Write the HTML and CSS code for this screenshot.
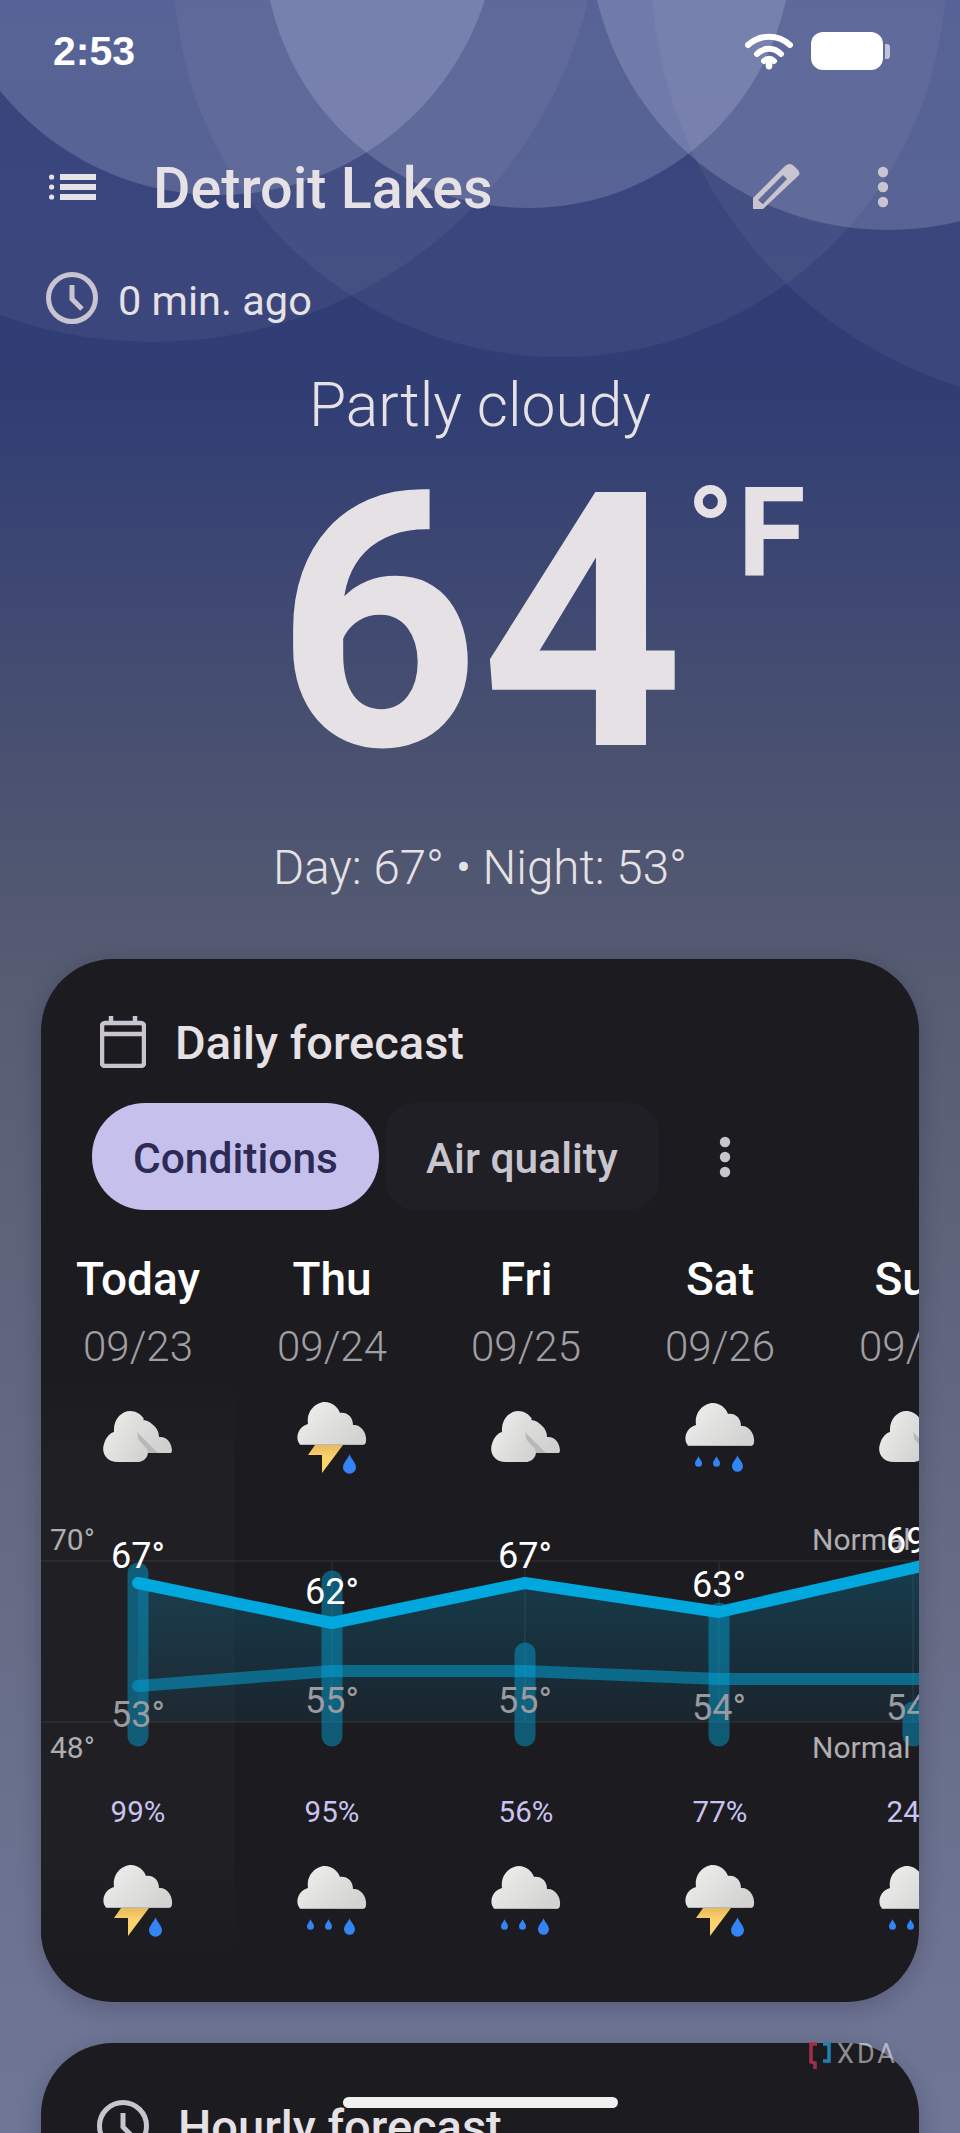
FILE: index.html
```html
<!doctype html>
<html>
<head>
<meta charset="utf-8" />
<meta name="viewport" content="width=device-width" />

<title>Detroit Lakes</title>

<link rel="stylesheet" href="styles.css">

</head>
<body>

<svg class="sky" viewBox="0 0 960 500" aria-hidden="true">
  <circle class="sky-faint" cx="153" cy="-106" r="448" />
  <circle class="sky-faint" cx="560" cy="-29" r="386" />
  <circle class="sky-faint" cx="1092" cy="-34" r="441" />
  <circle class="sky-light" cx="218" cy="-85" r="280" />
  <circle class="sky-light" cx="528" cy="-56" r="264" />
  <circle class="sky-light" cx="888" cy="-69" r="299" />
</svg>

<svg class="defs" aria-hidden="true">
  <defs>
    <linearGradient id="cloud-front" x1="0" y1="0" x2="1" y2="0.6">
      <stop offset="0" stop-color="#f1f1f0" />
      <stop offset="1" stop-color="#d3d3d1" />
    </linearGradient>
    <linearGradient id="cloud-back" x1="0" y1="0" x2="1" y2="0.6">
      <stop offset="0" stop-color="#e0e0de" />
      <stop offset="1" stop-color="#cfcfcd" />
    </linearGradient>
    <linearGradient id="bolt" x1="0" y1="0" x2="0" y2="1">
      <stop offset="0" stop-color="#e6b95f" />
      <stop offset="0.45" stop-color="#fdd36c" />
    </linearGradient>
    <linearGradient id="chart-area" x1="0" y1="0" x2="0" y2="1">
      <stop offset="0" stop-color="#00a8de" stop-opacity="0.24" />
      <stop offset="1" stop-color="#00a8de" stop-opacity="0.07" />
    </linearGradient>
    <symbol id="cloud" viewBox="0 0 70 70">
      <path fill="url(#cloud-front)" d="M4 43 C-2 40 -1 25 11 22 C9 8 20 0 28 0 C35 0 41 5 43 11 C50 10 56 15 56 23 C64 22 70 31 69 39 C69 42 67 43 65 43 Z" />
      <path fill="#b9b9b7" d="M4 43 H65 L67 42 H2 Z" />
    </symbol>
    <symbol id="drop" viewBox="0 0 12 18">
      <path fill="#3384f5" d="M6 0 C8 5 12 8 12 12 A6 6 0 0 1 0 12 C0 8 4 5 6 0 Z" />
    </symbol>
    <symbol id="partly" viewBox="0 0 70 70">
      <path fill="url(#cloud-back)" d="M30 42 V12 C36 8 44 8 49 13 C54 17 56 21 56 26 C63 25 69 31 69 40 L68 42 Z" />
      <path fill="#b8b8b6" d="M34 21 L35 28 L45 42 H55 Z" />
      <path fill="url(#cloud-front)" d="M15 51 C3 51 -2 41 1 33 C3 26 7 22 11 21 C10 8 19 0 27 0 C33 0 38 3 41 8 C37 11 35 16 34 21 L35 28 L44 38 C47 44 42 51 34 51 Z" />
    </symbol>
    <symbol id="storm" viewBox="0 0 70 72">
      <use href="#cloud" width="70" height="70" />
      <path fill="url(#bolt)" d="M18 43 H46 L25 71 V53 H11 Z" />
      <use href="#drop" x="46" y="52" width="13" height="20" />
    </symbol>
    <symbol id="rain" viewBox="0 0 70 72">
      <use href="#cloud" width="70" height="70" />
      <use href="#drop" x="10" y="53" width="7" height="11" />
      <use href="#drop" x="28" y="53" width="7" height="11" />
      <use href="#drop" x="47" y="52" width="11" height="17" />
    </symbol>
  </defs>
</svg>

<div class="status">
  <span class="status-time">2:53</span>
  <div class="status-icons">
    <svg class="status-wifi" viewBox="0 0 48 38">
      <path d="M3 13 C15 2 33 2 45 13" />
      <path d="M12 22 C19 15 29 15 36 22" />
      <path d="M19 29 C22 26 26 26 29 29" />
      <ellipse cx="24" cy="33" rx="3.4" ry="4.6" />
    </svg>
    <div class="status-battery"></div>
  </div>
</div>

<header class="app-header">
  <svg class="icon-menu" viewBox="0 0 47 26">
    <circle cx="2.6" cy="3" r="2.6" />
    <circle cx="2.6" cy="13" r="2.6" />
    <circle cx="2.6" cy="23" r="2.6" />
    <rect x="11" y="0" width="36" height="6" />
    <rect x="11" y="10" width="36" height="6" />
    <rect x="11" y="20" width="36" height="6" />
  </svg>
  <h1 class="app-title">Detroit Lakes</h1>
  <svg class="icon-edit" viewBox="0 0 48 48">
    <path fill-rule="evenodd" d="M1 35 L33 3 Q38 -1 42 3 L46 7 Q49 11 46 13 L11 46 H1 Z M6 37 L31 12 L35 16 L11 41 Z" />
  </svg>
  <svg class="icon-dots" viewBox="0 0 12 42">
    <circle cx="6" cy="6" r="5.2" />
    <circle cx="6" cy="21" r="5.2" />
    <circle cx="6" cy="36" r="5.2" />
  </svg>
</header>

<div class="updated">
  <svg class="icon-clock" viewBox="0 0 52 52">
    <circle cx="26" cy="26" r="23.5" />
    <path d="M26 13 V27 L36 37" />
  </svg>
  <span class="updated-text">0 min. ago</span>
</div>

<div class="condition">Partly cloudy</div>

<div class="now">
  <span class="now-temp">64</span>
  <span class="now-unit">°F</span>
</div>

<div class="day-night">Day: 67° • Night: 53°</div>

<section class="card">
  <div class="card-title">
    <svg class="icon-calendar" viewBox="0 0 46 52">
      <rect x="2" y="7" width="42" height="43" rx="3" />
      <path d="M2 18 H44 M11 0 V7 M35 0 V7" />
    </svg>
    <h2>Daily forecast</h2>
  </div>

  <div class="chips">
    <div class="chip chip--on"><span class="chip-text">Conditions</span></div>
    <div class="chip"><span class="chip-text">Air quality</span></div>
    <svg class="icon-dots icon-dots--chip" viewBox="0 0 12 42">
      <circle cx="6" cy="6" r="5.2" />
      <circle cx="6" cy="21" r="5.2" />
      <circle cx="6" cy="36" r="5.2" />
    </svg>
  </div>

  <div class="forecast">
    <div class="today-shade"></div>

    <div class="row">
      <div class="day">Today</div>
      <div class="day">Thu</div>
      <div class="day">Fri</div>
      <div class="day">Sat</div>
      <div class="day">Sun</div>
    </div>

    <div class="row row--dates">
      <div class="date">09/23</div>
      <div class="date">09/24</div>
      <div class="date">09/25</div>
      <div class="date">09/26</div>
      <div class="date">09/27</div>
    </div>

    <div class="row row--icons">
      <div class="cell"><svg class="wx wx--partly"><use href="#partly" /></svg></div>
      <div class="cell"><svg class="wx"><use href="#storm" /></svg></div>
      <div class="cell"><svg class="wx wx--partly"><use href="#partly" /></svg></div>
      <div class="cell"><svg class="wx wx--rain"><use href="#rain" /></svg></div>
      <div class="cell"><svg class="wx wx--partly"><use href="#partly" /></svg></div>
    </div>

    <!-- viewBox is in page coordinates -->
    <svg class="chart" viewBox="41 1500 878 290">
      <path class="chart-grid" d="M41 1561 H919 M41 1722 H919 M332 1561 V1722 M525 1561 V1722 M719 1561 V1722 M913 1561 V1722" />
      <path fill="url(#chart-area)" d="M138 1583 L332 1623 L525 1583 L719 1612 L913 1568 L919 1567 V1722 H138 Z" />

      <path class="chart-bar" d="M138 1573 V1736" />
      <path class="chart-bar" d="M332 1581 V1736" />
      <path class="chart-bar" d="M525 1653 V1736" />
      <path class="chart-bar" d="M719 1613 V1736" />
      <path class="chart-bar" d="M913 1712 V1736" />

      <path class="chart-low" d="M138 1686 L332 1671 L525 1671 L719 1679 L925 1679" />
      <path class="chart-high" d="M138 1583 L332 1623 L525 1583 L719 1612 L913 1568 L930 1564" />

      <text class="chart-axis" x="50" y="1550">70°</text>
      <text class="chart-axis" x="50" y="1758">48°</text>
      <text class="chart-axis" x="812" y="1550">Normal</text>
      <text class="chart-axis" x="812" y="1758">Normal</text>

      <text class="chart-hi" x="138" y="1568">67°</text>
      <text class="chart-hi" x="332" y="1604">62°</text>
      <text class="chart-hi" x="525" y="1568">67°</text>
      <text class="chart-hi" x="719" y="1597">63°</text>
      <text class="chart-hi" x="913" y="1553">69°</text>

      <text class="chart-lo" x="138" y="1727">53°</text>
      <text class="chart-lo" x="332" y="1713">55°</text>
      <text class="chart-lo" x="525" y="1713">55°</text>
      <text class="chart-lo" x="719" y="1720">54°</text>
      <text class="chart-lo" x="913" y="1720">54°</text>
    </svg>

    <div class="row row--pops">
      <div class="pop">99%</div>
      <div class="pop">95%</div>
      <div class="pop">56%</div>
      <div class="pop">77%</div>
      <div class="pop">24%</div>
    </div>

    <div class="row row--night">
      <div class="cell"><svg class="wx"><use href="#storm" /></svg></div>
      <div class="cell"><svg class="wx wx--rain"><use href="#rain" /></svg></div>
      <div class="cell"><svg class="wx wx--rain"><use href="#rain" /></svg></div>
      <div class="cell"><svg class="wx"><use href="#storm" /></svg></div>
      <div class="cell"><svg class="wx wx--rain"><use href="#rain" /></svg></div>
    </div>
  </div>
</section>

<section class="card card--next">
  <div class="card-title">
    <svg class="icon-clock icon-clock--card" viewBox="0 0 52 52">
      <circle cx="26" cy="26" r="23.5" />
      <path d="M26 13 V27 L36 37" />
    </svg>
    <h2>Hourly forecast</h2>
  </div>
</section>

<div class="watermark">
  <svg class="watermark-mark" viewBox="0 0 22 28">
    <path class="watermark-red" d="M8 2 H2 V20 L6 21 V27" />
    <path class="watermark-blue" d="M14 2 H20 V19 H14" />
  </svg>
  <span>XDA</span>
</div>

<div class="home-bar"></div>

</body>
</html>
```

FILE: styles.css
```css
* { box-sizing: border-box; }

html, body {
  margin: 0;
  height: 2133px;
}

body {
  position: relative;
  overflow: hidden;
  font-family: Roboto, sans-serif;
  color: #e6e1e5;
  background: linear-gradient(#2e3c78 0, #313e74 400px, #4b5270 780px, #575d72 1000px, #646a82 1500px, #6e7594 2000px, #6f7696 2133px);
}

h1, h2 {
  margin: 0;
  font-weight: 500;
}

/* background circles */
.sky {
  position: absolute;
  left: 0;
  top: 0;
  width: 960px;
  height: 500px;
}

.sky-light { fill: #dfe6ff; fill-opacity: 0.19; }
.sky-faint { fill: #fff; fill-opacity: 0.05; }

.defs {
  position: absolute;
  width: 0;
  height: 0;
}

/* -----  status bar ----- */

.status {
  position: relative;
  height: 102px;
  padding: 0 77px 0 53px;
  display: flex;
  align-items: center;
  justify-content: space-between;
  color: #fff;
}

.status-time {
  font-family: "Liberation Sans", sans-serif;
  font-size: 41px;
  font-weight: 700;
}

.status-icons {
  display: flex;
  align-items: center;
  gap: 18px;
}

.status-wifi {
  width: 48px;
  height: 38px;
  fill: #fff;
}

.status-wifi path {
  fill: none;
  stroke: #fff;
  stroke-width: 6;
  stroke-linecap: round;
}

.status-battery {
  position: relative;
  width: 72px;
  height: 38px;
  border-radius: 12px;
  background: #fff;
}

.status-battery:after {
  content: '';
  position: absolute;
  left: 74px;
  top: 12px;
  width: 5px;
  height: 15px;
  border-radius: 0 3px 3px 0;
  background: rgba(255, 255, 255, 0.6);
}

/* -----  header ----- */

.app-header {
  position: relative;
  height: 64px;
  margin-top: 53px;
  padding: 0 71px 0 49px;
  display: flex;
  align-items: center;
}

.icon-menu {
  width: 47px;
  height: 26px;
  fill: #e6e1e5;
}

.app-title {
  flex: 1;
  margin-left: 57px;
  padding-top: 3px;
  font-size: 57.5px;
  line-height: 64px;
}

.icon-edit {
  width: 48px;
  height: 48px;
  margin-right: 77px;
  fill: #cac4d0;
}

.icon-dots {
  width: 12px;
  height: 42px;
  fill: #cac4d0;
}

.updated {
  position: relative;
  height: 52px;
  margin-top: 53px;
  padding-left: 46px;
  display: flex;
  align-items: center;
  gap: 20px;
  font-size: 41.5px;
}

.updated-text {
  padding-top: 5px;
}

.icon-clock {
  width: 52px;
  height: 52px;
  fill: none;
  stroke: #cac4d0;
  stroke-width: 5;
}

.condition {
  position: relative;
  margin-top: 48px;
  text-align: center;
  font-size: 60.5px;
  font-weight: 300;
  line-height: 68px;
}

.now {
  position: relative;
  height: 300px;
  margin-top: 34px;
  display: grid;
  grid-template-columns: 1fr auto 1fr;
  font-weight: 700;
}

.now-temp {
  grid-column: 2;
  font-size: 356px;
  line-height: 300px;
}

.now-unit {
  margin-left: 2px;
  font-size: 124px;
  line-height: 118px;
  letter-spacing: 3px;
}

.day-night {
  margin-top: 66px;
  text-align: center;
  font-size: 47.5px;
  font-weight: 300;
  line-height: 56px;
}

/* -----  cards ----- */

.card {
  position: relative;
  height: 1043px;
  margin: 63px 41px 0;
  padding-top: 57px;
  overflow: hidden;
  border-radius: 72px;
  background: #1c1b20;
  box-shadow: 0 6px 22px rgba(20, 20, 40, 0.25);
}

.card--next {
  margin-top: 41px;
}

.card-title {
  height: 52px;
  padding-left: 59px;
  display: flex;
  align-items: center;
  gap: 29px;
}

.card-title h2 {
  padding-top: 2px;
  font-size: 47px;
  line-height: 52px;
}

.icon-calendar {
  width: 46px;
  height: 52px;
  fill: none;
  stroke: #cac4d0;
  stroke-width: 4.5;
}

.icon-clock--card {
  margin-left: -3px;
}

.chips {
  height: 107px;
  margin-top: 35px;
  padding-left: 51px;
  display: flex;
  align-items: center;
  gap: 6px;
  font-size: 42.5px;
  font-weight: 500;
}

.chip {
  height: 107px;
  padding: 0 41px;
  display: flex;
  align-items: center;
  border-radius: 30px;
  background: #201f25;
  color: #c9c5cf;
}

.chip-text {
  padding-top: 3px;
}

.chip--on {
  border-radius: 53px;
  background: #c5c0ec;
  color: #2d2a56;
}

.icon-dots--chip {
  margin-left: 54px;
}

/* -----  forecast ----- */

.forecast {
  position: relative;
  margin-top: 45px;
}

.today-shade {
  position: absolute;
  left: 0;
  top: 120px;
  width: 194px;
  height: 585px;
  background: linear-gradient(#1c1b20, #201f24 90px, #201f24 480px, #1c1b20);
}

.row {
  position: relative;
  display: flex;
}

.row > * {
  flex: none;
  width: 194px;
  text-align: center;
}

.day {
  margin-top: -1px;
  font-size: 46px;
  font-weight: 500;
  line-height: 50px;
  color: #fff;
}

.row--dates { margin-top: 17px; }

.date {
  margin-top: 1px;
  font-size: 42px;
  font-weight: 300;
  line-height: 50px;
  color: #a09fa3;
}

.row--icons { margin-top: 30px; }
.row--pops { margin-top: 4px; }
.row--night { margin-top: 35px; }

.cell {
  height: 70px;
}

.wx {
  width: 70px;
  height: 72px;
}

.wx--rain {
  margin-top: 1px;
}

.wx--partly {
  margin-top: 8px;
}

.chart {
  position: relative;
  display: block;
  width: 878px;
  height: 290px;
  margin-top: 28px;
}

.chart-grid {
  fill: none;
  stroke: rgba(255, 255, 255, 0.07);
  stroke-width: 1.5;
}

.chart-bar {
  fill: none;
  stroke: #00a8de;
  stroke-opacity: 0.45;
  stroke-width: 21;
  stroke-linecap: round;
}

.chart-high {
  fill: none;
  stroke: #00a8de;
  stroke-width: 12;
  stroke-linecap: round;
  stroke-linejoin: round;
}

.chart-low {
  fill: none;
  stroke: #00a8de;
  stroke-opacity: 0.5;
  stroke-width: 12;
  stroke-linecap: round;
  stroke-linejoin: round;
}

.chart-axis {
  font-size: 30px;
  fill: #aeaeb0;
}

.chart-hi, .chart-lo {
  font-size: 36px;
  text-anchor: middle;
}

.chart-hi { fill: #fff; }
.chart-lo { fill: #9a9a9f; }

.pop {
  font-size: 29.5px;
  line-height: 36px;
  color: #c9c3f0;
}

/* -----  overlays ----- */

.watermark {
  position: absolute;
  left: 809px;
  top: 2042px;
  display: flex;
  align-items: flex-start;
  gap: 6px;
  font-size: 27px;
  line-height: 24px;
  letter-spacing: 3px;
  color: rgba(255, 255, 255, 0.5);
}

.watermark-mark {
  width: 22px;
  height: 28px;
  fill: none;
  stroke-width: 3.5;
}

.watermark-red { stroke: #a03048; }
.watermark-blue { stroke: #2080b2; }

.home-bar {
  position: absolute;
  left: 343px;
  top: 2097px;
  width: 275px;
  height: 11px;
  border-radius: 6px;
  background: #f0f0f0;
}
```
